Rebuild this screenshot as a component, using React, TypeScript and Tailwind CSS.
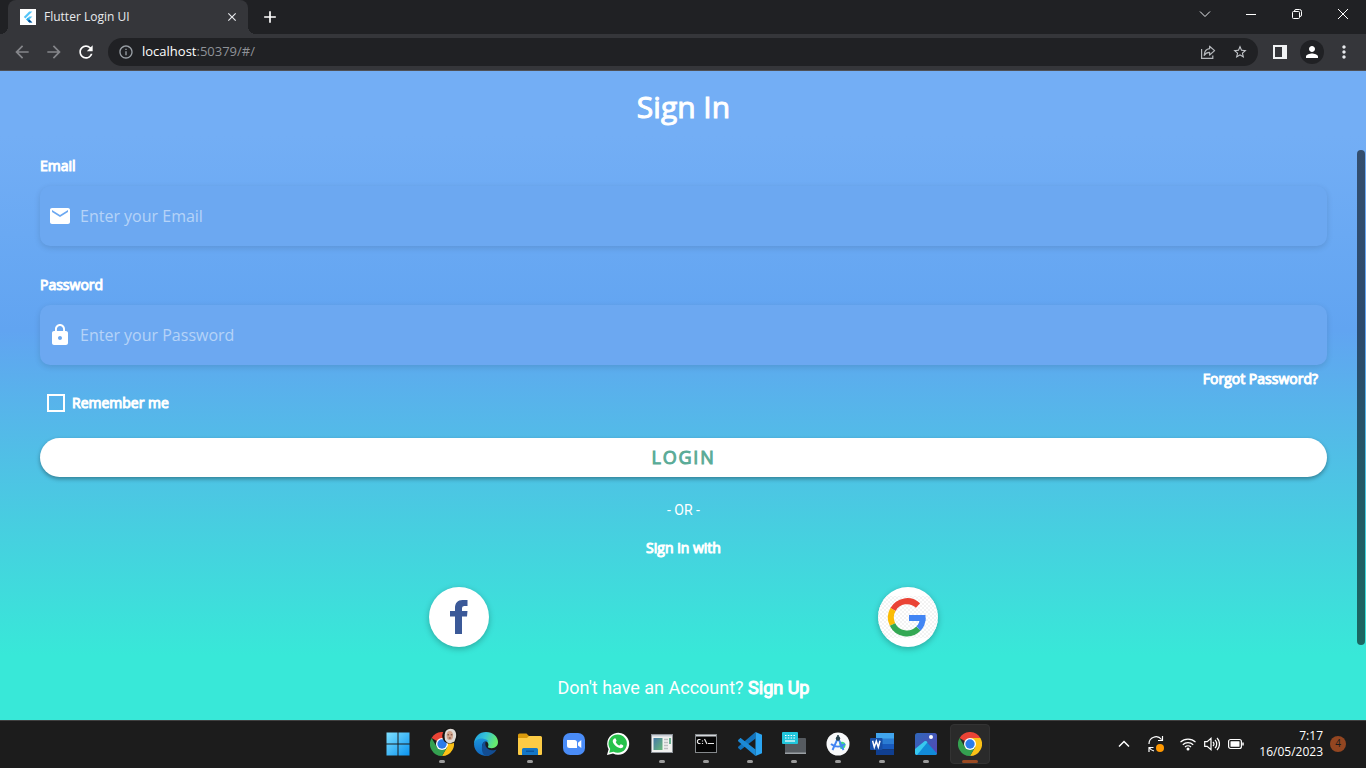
import type { ReactNode } from "react";
import {
  MdArrowBack,
  MdArrowForward,
  MdClose,
  MdEmail,
  MdInfoOutline,
  MdLock,
  MdMoreVert,
  MdPerson,
  MdRefresh,
  MdStarBorder,
  MdAdd,
} from "react-icons/md";

/* ---------- Browser icons ---------- */

function FlutterMark() {
  return (
    <svg viewBox="0 0 16 16" className="size-4 shrink-0" aria-hidden="true">
      <rect width="16" height="16" fill="#fff" />
      <path d="M9.2 2.500 3.800 7.900l1.600 1.600 7-7z" fill="#54c5f8" />
      <path d="M9.200 7.400 6.200 10.400l3 3.200h3.200l-3-3.200 3-3z" fill="#54c5f8" />
      <path d="m6.200 10.400 1.600-1.600 1.600 1.600-1.600 1.600z" fill="#29a8e8" />
      <path d="m7.800 12 1.600-1.600 3 3.200H9.200z" fill="#0b4f93" />
    </svg>
  );
}

function ChevronDown() {
  return (
    <svg viewBox="0 0 12 12" className="size-3" fill="none" stroke="#e8eaed" aria-hidden="true">
      <path d="m1 3.500 5 5 5-5" />
    </svg>
  );
}

function Minimise() {
  return (
    <svg viewBox="0 0 10 10" className="size-2.5" stroke="#fff" aria-hidden="true">
      <path d="M0 5.500h10" />
    </svg>
  );
}

function Restore() {
  return (
    <svg viewBox="0 0 10 10" className="size-2.5" fill="none" stroke="#fff" aria-hidden="true">
      <rect x=".5" y="2.5" width="7" height="7" rx="1" />
      <path d="M2.5 2.3V2A1.5 1.5 0 0 1 4 .5h3.500a2 2 0 0 1 2 2V6a1.500 1.500 0 0 1-1.500 1.500" />
    </svg>
  );
}

function CloseWindow() {
  return (
    <svg viewBox="0 0 10 10" className="size-2.5" stroke="#fff" aria-hidden="true">
      <path d="m0 0 10 10M10 0 0 10" />
    </svg>
  );
}

function ShareIcon() {
  return (
    <svg viewBox="0 0 16 16" className="size-4" fill="none" stroke="#b4b7bb" strokeWidth="1.200" aria-hidden="true">
      <path d="M1.600 5v9.400h11.200v-3" />
      <path d="M9.600 2.200 14.600 6.600l-5 4.400V8.400C7 8.400 5.400 9.400 4.200 11.400c.2-3.600 2-6.400 5.400-6.700z" strokeLinejoin="round" />
    </svg>
  );
}

function SidePanel() {
  return (
    <svg viewBox="0 0 14 14" className="size-3.5" aria-hidden="true">
      <path fillRule="evenodd" d="M0 0h14v14H0zM2 2v10h7V2z" fill="#f1f3f4" />
    </svg>
  );
}

/* ---------- Taskbar icons ---------- */

function WindowsIcon() {
  return (
    <svg viewBox="0 0 24 24" className="size-6" aria-hidden="true">
      <defs>
        <linearGradient id="win" x1="0" y1="0" x2="1" y2="1">
          <stop offset="0" stopColor="#7fe0ff" />
          <stop offset="1" stopColor="#0a93ef" />
        </linearGradient>
      </defs>
      <path d="M.5.5h11v11H.5zM12.500.5h11v11h-11zM.5 12.500h11v11H.5zM12.500 12.500h11v11h-11z" fill="url(#win)" />
    </svg>
  );
}

function ChromeIcon() {
  return (
    <svg viewBox="0 0 24 24" className="size-6" aria-hidden="true">
      <path d="M12 12 1.600 6A12 12 0 0 1 22.400 6z" fill="#ea4335" />
      <path d="M12 6h10.400A12 12 0 0 1 12 24l5.200-9z" fill="#fbc116" />
      <path d="M1.600 6A12 12 0 0 0 12 24l5.200-9-5.200 3-5.200-3z" fill="#34a050" />
      <circle cx="12" cy="12" r="6" fill="#fff" />
      <circle cx="12" cy="12" r="4.700" fill="#2a7bea" />
    </svg>
  );
}

function ChromeProfileIcon() {
  return (
    <span className="relative block size-6">
      <ChromeIcon />
      <svg viewBox="0 0 16 16" className="absolute -top-1 -right-1 size-4" aria-hidden="true">
        <circle cx="8" cy="8" r="7.800" fill="#141312" />
        <path d="M3 12C1.500 4 4.500.8 8.500.8S14.800 4 14 9l-1.500 4.500L8 15.500l-3-1z" fill="#dedad5" />
        <ellipse cx="7.800" cy="7.500" rx="3.200" ry="4.500" fill="#d0a48c" />
        <path d="M5.500 6.800H7M8.800 6.800h1.500M6.800 10h2" stroke="#5b3329" strokeWidth=".9" />
      </svg>
    </span>
  );
}

function EdgeIcon() {
  return (
    <svg viewBox="0 0 24 24" className="size-6" aria-hidden="true">
      <defs>
        <linearGradient id="edgeTop" x1="0" y1="0" x2="1" y2=".3">
          <stop offset="0" stopColor="#1b9de2" />
          <stop offset=".5" stopColor="#35c1d7" />
          <stop offset="1" stopColor="#66eb6e" />
        </linearGradient>
        <linearGradient id="edgeSide" x1="0" y1="0" x2="0" y2="1">
          <stop offset="0" stopColor="#1b94dd" />
          <stop offset="1" stopColor="#1065bd" />
        </linearGradient>
      </defs>
      <path d="M0 12C.3 4.500 5.500 0 12 0c7 0 12 4.800 12 10 0 4-3 6.200-6.200 6.200-2.500 0-4.300-.8-3.800-1.700 1-1.200.8-5.500-4.500-6.500C5 7.200 1.300 9 0 12z" fill="url(#edgeTop)" />
      <path d="M0 12c1-4 5-5.800 9.500-5.300 2.500.3 4.500 1.600 5 3.300-3-1.500-6.500.5-6.500 4.500 0 4.500 3.500 8.500 8 8.800A12 12 0 0 1 0 12z" fill="url(#edgeSide)" />
      <path d="M8 14.500C8 11 10 9.200 12.200 9.100c-1.800 2.200-1.200 8.500 5.600 9.100 2 .2 3.600-.3 4.900-1C20.500 21.500 16 24 11.800 24 8.500 22.500 7.500 18 8 14.500z" fill="#134d92" />
    </svg>
  );
}

function ExplorerIcon() {
  return (
    <svg viewBox="0 0 24 24" className="size-6" aria-hidden="true">
      <path d="M0 3a1.500 1.500 0 0 1 1.500-1.500h7L11 4v3H0z" fill="#d99a0c" />
      <path d="M0 6h9l2-2h11.500A1.500 1.500 0 0 1 24 5.500V22a1 1 0 0 1-1 1H1a1 1 0 0 1-1-1z" fill="#fccb45" />
      <path d="M4 23v-5.500A1.500 1.500 0 0 1 5.500 16h13a1.500 1.500 0 0 1 1.500 1.500V23z" fill="#1476c5" />
      <path d="M8 18.500h8v1.500H8z" fill="#0b559c" />
    </svg>
  );
}

function ZoomIcon() {
  return (
    <svg viewBox="0 0 24 24" className="size-6" aria-hidden="true">
      <rect x="1" y="1" width="22" height="22" rx="7" fill="#4a8cf7" />
      <path d="M5 8h7.500A2.500 2.500 0 0 1 15 10.500V16H7.500A2.500 2.500 0 0 1 5 13.500zM16 10.700 19.300 8v8L16 13.500z" fill="#fff" />
    </svg>
  );
}

function WhatsAppIcon() {
  return (
    <svg viewBox="0 0 24 24" className="size-6" aria-hidden="true">
      <path d="M1 23l1.600-5.800A11 11 0 1 1 7 21.500z" fill="#fff" />
      <path d="M3.200 20.800l1-3.800A9.200 9.200 0 1 1 7.400 19.800z" fill="#27c24c" />
      <path d="M8.500 6.500c.8-.4 1.200 0 1.500.9l.5 1.200c.2.500-.8 1.300-.7 1.600.7 1.500 2 2.600 3.500 3.200.5.100 1.200-1.300 1.700-1.100l2 1c.8.400 0 2-.7 2.400-1.400.8-3 .5-5.200-.7-2.200-1.300-4.300-3.700-4.400-5.700 0-1.200.9-2.400 1.800-2.800z" fill="#fff" />
    </svg>
  );
}

function WindowAppIcon() {
  return (
    <svg viewBox="0 0 24 24" className="size-6" aria-hidden="true">
      <defs>
        <linearGradient id="pane" x1="0" y1="0" x2="1" y2="1">
          <stop offset="0" stopColor="#4779a8" />
          <stop offset="1" stopColor="#67b979" />
        </linearGradient>
      </defs>
      <rect x="1.500" y="2.500" width="21" height="18" fill="#f1f1ef" stroke="#8d9298" />
      <path d="M2 3h20v1.500H2z" fill="#c9ced6" />
      <rect x="3.500" y="6" width="9" height="12" fill="url(#pane)" />
      <path d="M14 7.500h4M14 10.500h4M14 13.500h4M14 16.500h4" stroke="#bcbfc1" strokeWidth="1.400" />
      <path d="M20 6v6" stroke="#3e9b74" strokeWidth="1.500" />
    </svg>
  );
}

function TerminalIcon() {
  return (
    <svg viewBox="0 0 24 24" className="size-6" aria-hidden="true">
      <rect x="1.500" y="2.500" width="21" height="18" fill="#050505" stroke="#85898c" />
      <path d="M2 3h20v1.500H2z" fill="#d5d8dc" />
      <path d="M6.500 7.500H4.500L3.500 8.500v2l1 1h2M8.500 8.500v1M8.500 11v1M10.500 7l2.500 5M14 11.500h6" fill="none" stroke="#e7e7e7" strokeWidth="1.200" />
    </svg>
  );
}

function CodeIcon() {
  return (
    <svg viewBox="0 0 24 24" className="size-6" aria-hidden="true">
      <path d="M17.500 0v6.500L3.300 17.600c-.5.400-1 .4-1.400 0L.4 16.200c-.5-.5-.5-1.100 0-1.600z" fill="#1173bd" />
      <path d="M17.500 24v-6.500L3.300 6.400c-.5-.4-1-.4-1.400 0L.4 7.800c-.5.500-.5 1.100 0 1.600z" fill="#1c8ad6" />
      <path d="M17.500 0 24 2.700v18.600L17.500 24z" fill="#2ba5f2" />
    </svg>
  );
}

function KeyboardAppIcon() {
  return (
    <svg viewBox="0 0 24 24" className="size-6" aria-hidden="true">
      <path d="M3 6h20a1 1 0 0 1 1 1v14.500H3z" fill="#565b60" />
      <path d="M3 20.500h21V22H3z" fill="#9ba0a4" />
      <rect x="0" y="0" width="16" height="12" rx="1" fill="#21c6dc" />
      <path d="M3 3.500h10M3 6h10" stroke="#fff" strokeWidth="1.200" strokeDasharray="1.500 1.300" />
      <path d="M3 9h10" stroke="#fff" strokeWidth="1.200" />
    </svg>
  );
}

function AndroidStudioIcon() {
  return (
    <svg viewBox="0 0 24 24" className="size-6" aria-hidden="true">
      <circle cx="12" cy="12" r="11.500" fill="#f8f9fa" />
      <path d="M13 11c2-2 6-1.500 6.500 1.500.3 3-2 5-5 4.500z" fill="#3ddc84" />
      <path d="M11.500 7 6.500 18M12.500 7l5 11M5 12c4 3.500 10 3.500 14 0" fill="none" stroke="#4285f4" strokeWidth="1.900" />
      <circle cx="12" cy="6.500" r="2.200" fill="#29434e" />
      <path d="M12 3v3" stroke="#29434e" strokeWidth="1.600" />
    </svg>
  );
}

function WordIcon() {
  return (
    <svg viewBox="0 0 24 24" className="size-6" aria-hidden="true">
      <path d="M6 1h18v6H6z" fill="#41a5ee" />
      <path d="M6 6.500h18V12H6z" fill="#2b7cd3" />
      <path d="M6 12h18v5.500H6z" fill="#185abd" />
      <path d="M6 17.500h18V23H6z" fill="#103f91" />
      <rect x="0" y="6" width="12.500" height="12" rx="1" fill="#174ea6" />
      <path d="m2.600 8.800 1.700 6.400 2-6 2 6 1.700-6.400" fill="none" stroke="#fff" strokeWidth="1.500" />
    </svg>
  );
}

function PhotosIcon() {
  return (
    <svg viewBox="0 0 24 24" className="size-6" aria-hidden="true">
      <defs>
        <linearGradient id="sky" x1="0" y1="0" x2="1" y2="1">
          <stop offset="0" stopColor="#2f67b9" />
          <stop offset="1" stopColor="#5746b4" />
        </linearGradient>
      </defs>
      <rect x="1" y="1" width="22" height="22" rx="2.500" fill="url(#sky)" />
      <path d="m1.500 22 9-11c1-1 2-1 3 0l9.500 10.500c-.3 1-1 1.500-2 1.500H3.500c-1 0-1.600-.3-2-1z" fill="#128bd8" />
      <path d="M1 17 10.200 9.500c1.200-.8 2.400-.5 3.300.7L3 23c-1.200 0-2-1-2-2z" fill="#37c8ef" />
      <circle cx="17" cy="5" r="2" fill="#fff" />
    </svg>
  );
}

function TaskItem({
  label,
  state = "idle",
  children,
}: {
  label: string;
  state?: "idle" | "open" | "active";
  children: ReactNode;
}) {
  return (
    <button
      type="button"
      aria-label={label}
      className={
        state === "active"
          ? "relative flex size-10 items-center justify-center rounded border border-[#333333] bg-[#2a2a2a]"
          : "relative flex size-10 items-center justify-center rounded border border-transparent"
      }
    >
      {children}
      {state === "open" && (
        <span className="absolute bottom-0 left-1/2 h-[3px] w-1.5 -translate-x-1/2 rounded-full bg-[#9b9b9b]" />
      )}
      {state === "active" && (
        <span className="absolute bottom-0 left-1/2 h-[3px] w-4 -translate-x-1/2 rounded-full bg-[#9a4a22]" />
      )}
    </button>
  );
}

/* ---------- Browser window ---------- */

function TabStrip() {
  return (
    <div className="flex h-[34px] items-stretch bg-[#202124] pl-2 text-[#e8eaed]">
      <div className="relative flex w-60 items-center gap-2 rounded-t-lg bg-[#35363a] px-3">
        <span className="absolute bottom-0 -left-2 size-2 bg-[radial-gradient(circle_at_0_0,#202124_8px,#35363a_8px)]" />
        <span className="absolute -right-2 bottom-0 size-2 bg-[radial-gradient(circle_at_100%_0,#202124_8px,#35363a_8px)]" />
        <FlutterMark />
        <span className="flex-1 text-xs">Flutter Login UI</span>
        <button type="button" aria-label="Close tab" className="-mr-1 flex size-4 items-center justify-center">
          <MdClose className="size-3.5" />
        </button>
      </div>
      <button type="button" aria-label="New tab" className="ml-3 flex w-5 items-center justify-center text-white">
        <MdAdd className="size-5" />
      </button>
      <div className="ml-auto flex pb-1.5">
        <button type="button" aria-label="Search tabs" className="flex w-[46px] items-center justify-center">
          <ChevronDown />
        </button>
        <button type="button" aria-label="Minimise" className="flex w-[46px] items-center justify-center">
          <Minimise />
        </button>
        <button type="button" aria-label="Restore" className="flex w-[46px] items-center justify-center">
          <Restore />
        </button>
        <button type="button" aria-label="Close window" className="flex w-[46px] items-center justify-center">
          <CloseWindow />
        </button>
      </div>
    </div>
  );
}

function Toolbar() {
  return (
    <div className="flex h-[37px] items-center border-b border-[#4f5054] bg-[#35363a] px-3">
      <div className="flex gap-3">
        <button type="button" aria-label="Back" className="text-[#85868a]">
          <MdArrowBack className="size-5" />
        </button>
        <button type="button" aria-label="Forward" className="text-[#85868a]">
          <MdArrowForward className="size-5" />
        </button>
        <button type="button" aria-label="Reload" className="text-white">
          <MdRefresh className="size-5" />
        </button>
      </div>
      <div className="ml-3 flex h-7 flex-1 items-center rounded-full bg-[#202124] px-2.5">
        <MdInfoOutline className="size-4 text-[#9aa0a6]" />
        <span className="ml-2 flex-1 text-[13px] text-[#8f9297]">
          <span className="text-white">localhost</span>:50379/#/
        </span>
        <button type="button" aria-label="Share" className="mr-4">
          <ShareIcon />
        </button>
        <button type="button" aria-label="Bookmark" className="text-[#c6c9cd]">
          <MdStarBorder className="size-4" />
        </button>
      </div>
      <div className="ml-3 flex items-center gap-2.5">
        <button type="button" aria-label="Side panel" className="flex size-5 items-center justify-center">
          <SidePanel />
        </button>
        <button
          type="button"
          aria-label="Profile"
          className="flex size-6 items-center justify-center rounded-full bg-[#202124] text-white"
        >
          <MdPerson className="size-[18px]" />
        </button>
        <button type="button" aria-label="Menu" className="text-[#e8eaed]">
          <MdMoreVert className="size-5" />
        </button>
      </div>
    </div>
  );
}

/* ---------- Login page ---------- */

function Field({
  id,
  label,
  type,
  placeholder,
  icon,
}: {
  id: string;
  label: string;
  type: string;
  placeholder: string;
  icon: ReactNode;
}) {
  return (
    <div>
      <label htmlFor={id} className="block text-sm [-webkit-text-stroke:1px_white]">
        {label}
      </label>
      <div className="mt-2.5 flex h-[60px] items-center gap-2 rounded-[10px] bg-[#6ca8f1] pl-2 shadow-[0_2px_6px_rgba(0,0,0,0.12)]">
        {icon}
        <input
          id={id}
          type={type}
          placeholder={placeholder}
          className="h-full flex-1 bg-transparent text-base text-white outline-none placeholder:text-white/50"
        />
      </div>
    </div>
  );
}

function FacebookMark() {
  return (
    <svg viewBox="0 0 60 60" className="size-full" aria-hidden="true">
      <path
        d="M26 47V29.500h-5V24h5v-3c0-5 2.600-8 7.500-8H38.500v6h-3c-1.500 0-2.500.8-2.500 2.500V24h5.500l-.5 5.500H33V47z"
        fill="#3b5998"
      />
    </svg>
  );
}

function GoogleMark() {
  return (
    <svg viewBox="0 0 60 60" className="size-full" aria-hidden="true">
      <defs>
        <pattern id="check" width="4" height="4" patternUnits="userSpaceOnUse">
          <path d="M0 0h2v2H0zM2 2h2v2H2z" fill="#f3f3f3" />
        </pattern>
      </defs>
      <path d="M7 9h46a30 30 0 0 1 0 42H7A30 30 0 0 1 7 9z" fill="url(#check)" />
      <g fill="none" strokeWidth="6">
        <path d="M40 18.500A16 16 0 0 0 15 22.500" stroke="#ea4335" />
        <path d="M15 22.500a16 16 0 0 0-.5 15" stroke="#fbbc05" />
        <path d="M14.500 37.500A16 16 0 0 0 40.500 41.500" stroke="#34a853" />
        <path d="M40.500 41.500c2.600-2.500 4.200-6 4-10.500" stroke="#4285f4" />
        <path d="M31 31h16.500" stroke="#4285f4" />
      </g>
    </svg>
  );
}

function SocialButton({ label, children }: { label: string; children: ReactNode }) {
  return (
    <button
      type="button"
      aria-label={label}
      className="size-[60px] overflow-hidden rounded-full bg-white shadow-[0_2px_6px_rgba(0,0,0,0.26)]"
    >
      {children}
    </button>
  );
}

function LoginPage() {
  return (
    <main className="relative flex-1 bg-[linear-gradient(to_bottom,#73aef5_10%,#61a4f1_40%,#47cee0_70%,#38e8d8_90%)] pt-3.5 pr-[39px] pb-5 pl-10 text-white">
      <h1 className="text-center text-[30px] leading-11 [-webkit-text-stroke:1px_white]">Sign In</h1>
      <form className="mt-[27px]" onSubmit={(event) => event.preventDefault()}>
        <div className="flex flex-col gap-[29px]">
          <Field
            id="email"
            label="Email"
            type="email"
            placeholder="Enter your Email"
            icon={<MdEmail className="size-6" />}
          />
          <Field
            id="password"
            label="Password"
            type="password"
            placeholder="Enter your Password"
            icon={<MdLock className="size-6" />}
          />
        </div>
        <div className="mt-1 flex justify-end pr-[9px]">
          <a href="#forgot" className="text-sm [-webkit-text-stroke:1px_white]">
            Forgot Password?
          </a>
        </div>
        <div className="mt-1 flex items-center gap-[7px] pl-[7px]">
          <input
            id="remember"
            type="checkbox"
            className="size-[18px] appearance-none border-2 border-white bg-transparent checked:bg-white"
          />
          <label htmlFor="remember" className="text-sm [-webkit-text-stroke:1px_white]">
            Remember me
          </label>
        </div>
        <button
          type="submit"
          className="mt-[25px] block h-[39px] w-full rounded-full bg-white pb-0.5 text-lg tracking-widest text-[#5aab97] shadow-[0_2px_4px_rgba(0,0,0,0.35)] [-webkit-text-stroke:1px_#5aab97]"
        >
          LOGIN
        </button>
      </form>
      <p className="mt-[23px] text-center font-[Roboto] text-sm">- OR -</p>
      <p className="mt-[18px] text-center text-sm [-webkit-text-stroke:1px_white]">Sign in with</p>
      <div className="mt-[29px] flex justify-evenly">
        <SocialButton label="Sign in with Facebook">
          <FacebookMark />
        </SocialButton>
        <SocialButton label="Sign in with Google">
          <GoogleMark />
        </SocialButton>
      </div>
      <p className="mt-[29px] text-center font-[Roboto] text-lg leading-6">
        Don't have an Account?{" "}
        <a href="#signup" className="[-webkit-text-stroke:1px_white]">
          Sign Up
        </a>
      </p>
      <div className="absolute top-[79px] right-px bottom-[75px] w-2 rounded-full bg-black/55" />
    </main>
  );
}

/* ---------- Taskbar ---------- */

function Tray() {
  return (
    <div className="flex items-center justify-end pr-5 text-white">
      <svg viewBox="0 0 12 12" className="size-3" fill="none" stroke="#fff" strokeWidth="1.500" aria-hidden="true">
        <path d="m1 8.500 5-5 5 5" />
      </svg>
      <svg viewBox="0 0 18 18" className="ml-[17px] size-[18px]" fill="none" stroke="#fff" strokeWidth="1.200" aria-hidden="true">
        <path d="M2 9a7 7 0 0 1 12.500-4.500M15.500 1v4.500H11M6.500 12.500H2V17M2.500 13c1 1.600 2.300 2.500 4.500 3" />
        <circle cx="13" cy="13" r="4" fill="#ff9800" stroke="none" />
      </svg>
      <svg viewBox="0 0 16 16" className="ml-[15px] size-4" fill="none" stroke="#fff" strokeWidth="1.200" aria-hidden="true">
        <path d="M.5 6.200a10.600 10.600 0 0 1 15 0M2.800 8.700a7.400 7.400 0 0 1 10.400 0M5 11a4.300 4.300 0 0 1 6 0" />
        <circle cx="8" cy="13" r="1.500" fill="#fff" stroke="none" />
      </svg>
      <svg viewBox="0 0 16 16" className="ml-2 size-4" fill="none" stroke="#fff" strokeWidth="1.200" aria-hidden="true">
        <path d="M.7 5.700h2.500L7 2.300v11.400l-3.800-3.400H.7zM9 5.800a3.300 3.300 0 0 1 0 4.400M11 3.800a6 6 0 0 1 0 8.400M13 2a8.500 8.500 0 0 1 0 12" />
      </svg>
      <svg viewBox="0 0 16 16" className="ml-2 size-4" fill="none" stroke="#fff" aria-hidden="true">
        <rect x=".6" y="3.500" width="12.800" height="9" rx="2" strokeWidth="1.200" />
        <rect x="2.500" y="5.300" width="9" height="5.400" rx=".5" fill="#fff" stroke="none" />
        <path d="M15 6.500v3" strokeWidth="1.500" />
      </svg>
      <div className="ml-[15px] text-right text-xs leading-4">
        <div>7:17</div>
        <div>16/05/2023</div>
      </div>
      <span className="ml-[7px] flex size-4 items-center justify-center rounded-full bg-[#934621] text-[10px] text-[#1b1b1b]">
        4
      </span>
    </div>
  );
}

function Taskbar() {
  return (
    <footer className="grid h-12 grid-cols-[1fr_auto_1fr] items-center border-t border-[#404040] bg-[#1c1c1c] pb-0.5 pl-0.5">
      <div />
      <nav className="flex gap-1" aria-label="Taskbar">
        <TaskItem label="Start">
          <WindowsIcon />
        </TaskItem>
        <TaskItem label="Chrome profile" state="open">
          <ChromeProfileIcon />
        </TaskItem>
        <TaskItem label="Edge">
          <EdgeIcon />
        </TaskItem>
        <TaskItem label="File Explorer" state="open">
          <ExplorerIcon />
        </TaskItem>
        <TaskItem label="Zoom">
          <ZoomIcon />
        </TaskItem>
        <TaskItem label="WhatsApp">
          <WhatsAppIcon />
        </TaskItem>
        <TaskItem label="Window" state="open">
          <WindowAppIcon />
        </TaskItem>
        <TaskItem label="Command Prompt" state="open">
          <TerminalIcon />
        </TaskItem>
        <TaskItem label="Visual Studio Code" state="open">
          <CodeIcon />
        </TaskItem>
        <TaskItem label="Keyboard" state="open">
          <KeyboardAppIcon />
        </TaskItem>
        <TaskItem label="Android Studio" state="open">
          <AndroidStudioIcon />
        </TaskItem>
        <TaskItem label="Word" state="open">
          <WordIcon />
        </TaskItem>
        <TaskItem label="Photos" state="open">
          <PhotosIcon />
        </TaskItem>
        <TaskItem label="Chrome" state="active">
          <ChromeIcon />
        </TaskItem>
      </nav>
      <Tray />
    </footer>
  );
}

export default function App() {
  return (
    <div className="flex min-h-screen flex-col font-['Open_Sans','Noto_Sans',sans-serif]">
      <header>
        <TabStrip />
        <Toolbar />
      </header>
      <LoginPage />
      <Taskbar />
    </div>
  );
}
